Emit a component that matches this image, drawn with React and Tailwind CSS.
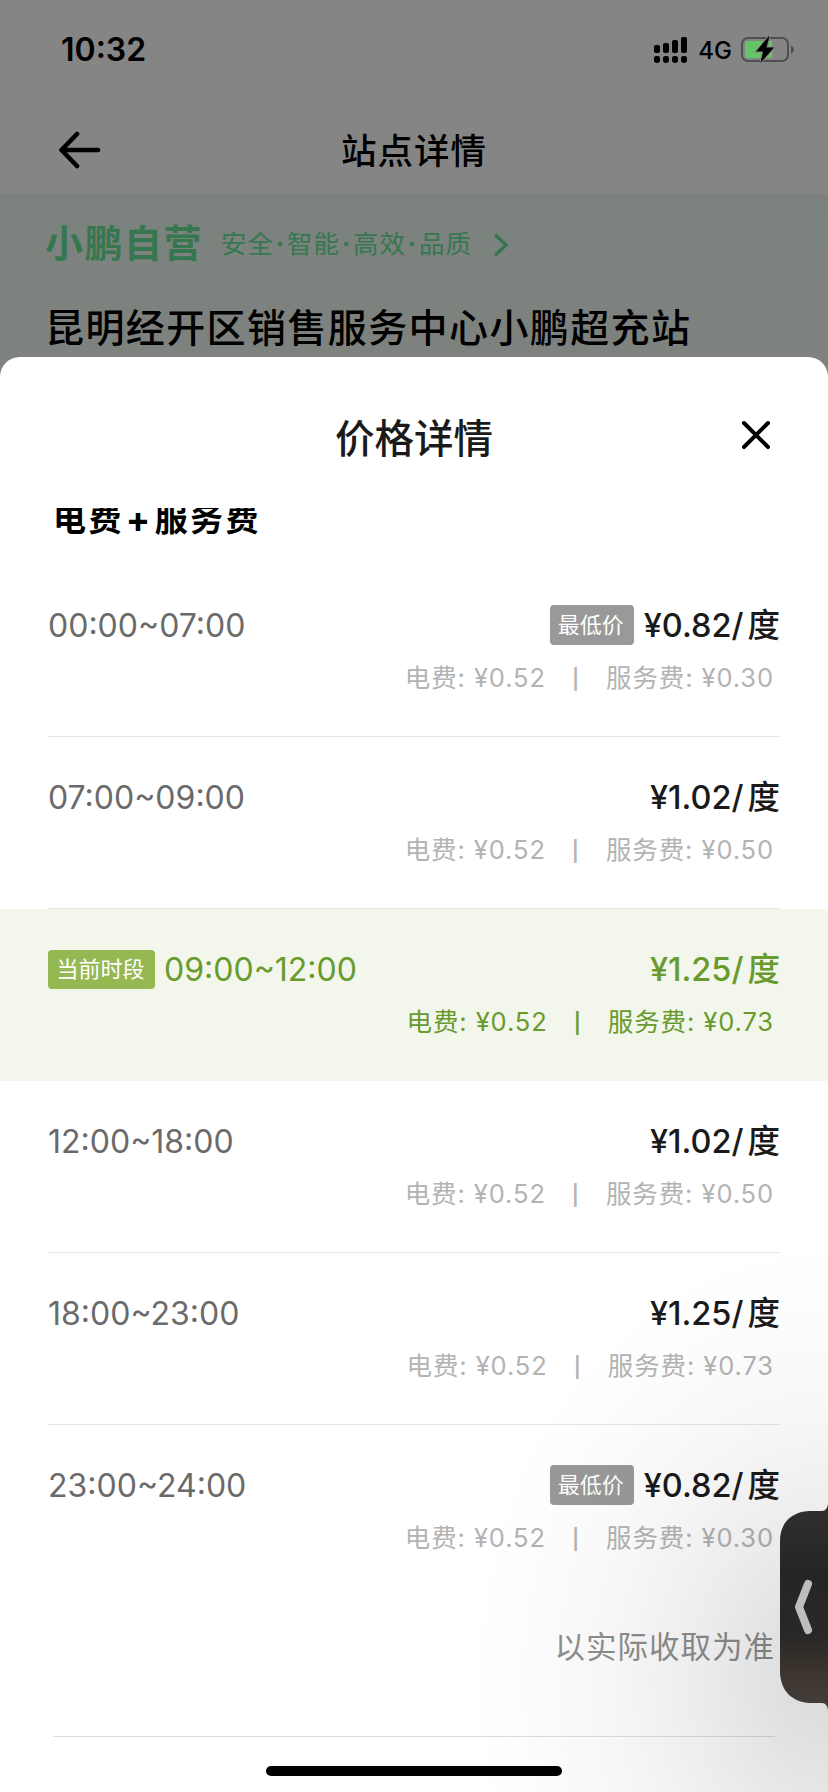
const periods = [
  { time: '00:00~07:00', price: '0.82', power: '0.52', service: '0.30', lowest: true },
  { time: '07:00~09:00', price: '1.02', power: '0.52', service: '0.50' },
  { time: '09:00~12:00', price: '1.25', power: '0.52', service: '0.73', current: true },
  { time: '12:00~18:00', price: '1.02', power: '0.52', service: '0.50' },
  { time: '18:00~23:00', price: '1.25', power: '0.52', service: '0.73' },
  { time: '23:00~24:00', price: '0.82', power: '0.52', service: '0.30', lowest: true },
];

const tags = ['安全', '智能', '高效', '品质'];

function StatusBar() {
  return (
    <div className="flex h-[100px] items-center justify-between pl-[61px] pr-[33px]">
      <span className="text-[32px] font-semibold leading-none">10:32</span>
      <div className="flex items-center">
        <svg width="34" height="28" viewBox="0 0 34 28" fill="currentColor">
          <rect x="0" y="9" width="6" height="8" rx="2" />
          <rect x="9" y="7" width="6" height="10" rx="2" />
          <rect x="18" y="4" width="6" height="13" rx="2" />
          <rect x="27" y="1" width="6" height="16" rx="2" />
          <rect x="0" y="20" width="6" height="7" rx="2.4" />
          <rect x="9" y="20" width="6" height="7" rx="2.4" />
          <rect x="18" y="20" width="6" height="7" rx="2.4" />
          <rect x="27" y="20" width="6" height="7" rx="2.4" />
        </svg>
        <span className="ml-[10px] pt-[1px] text-[24px] font-medium leading-none">4G</span>
        <svg className="ml-[9px]" width="54" height="28" viewBox="0 0 54 28">
          <rect x="1" y="2" width="46" height="23" rx="6" fill="none" stroke="#4f4f4f" strokeWidth="2" />
          <path d="M7 5H31V22H7Q4 22 4 19V8Q4 5 7 5Z" fill="#65c466" />
          <path d="M50 9.500Q53 11 53 13.500T50 18Z" fill="#4f4f4f" />
          <path d="M28 0L15 15.500H22L19.500 27L33 11.500H25.500L28.500 0Z" fill="#000" stroke="#858585" strokeWidth="2" paintOrder="stroke" />
        </svg>
      </div>
    </div>
  );
}

function NavBar() {
  return (
    <div className="grid h-[94px] grid-cols-3 items-center pl-[57px] pr-[57px] pt-[6px]">
      <svg width="44" height="38" viewBox="0 0 44 38" fill="none" stroke="currentColor" strokeWidth="4.600" strokeLinecap="round" strokeLinejoin="round">
        <path d="M20 3L4.500 19L20 35M4.500 19H41" />
      </svg>
      <h1 className="pt-[3px] text-center text-[35.500px] font-medium leading-none tracking-[1px]">站点详情</h1>
    </div>
  );
}

function StationHeader() {
  return (
    <div className="h-[183px] bg-gradient-to-b from-[#7b827e] to-[#7f827f] pl-[45px] pt-[29px]">
      <div className="flex h-[40px] items-center text-[#36774f]">
        <span className="text-[38px] font-bold leading-none tracking-[1.500px]">小鹏自营</span>
        <div className="ml-[18px] flex items-center pt-[2px] text-[25.500px] leading-none tracking-[1px]">
          {tags.map((tag, i) => (
            <span key={tag} className="flex items-center">
              {i > 0 && <span className="w-[13px] text-center font-bold">·</span>}
              {tag}
            </span>
          ))}
        </div>
        <svg className="ml-[20px] mt-[3px]" width="18" height="24" viewBox="0 0 18 24" fill="none" stroke="currentColor" strokeWidth="3.400">
          <path d="M3 1.500L14 12L3 22.500" />
        </svg>
      </div>
      <h2 className="mt-[45px] whitespace-nowrap text-[39px] font-medium leading-none tracking-[1.400px] text-black">
        昆明经开区销售服务中心小鹏超充站
      </h2>
    </div>
  );
}

function PeriodRow({ period, last }) {
  const { time, price, power, service, lowest, current } = period;
  return (
    <div className={current ? 'h-[172px] bg-[#f2f6eb] px-12 text-[#689a2e]' : 'h-[172px] px-12'}>
      <div
        className={
          current || last
            ? 'flex h-full flex-col pt-[40px]'
            : 'flex h-full flex-col border-b border-[#e5e5e5] pt-[40px]'
        }
      >
        <div className="flex h-[40px] items-center justify-between">
          <div className="flex items-center">
            {current && (
              <span className="mr-[9px] flex h-[39px] w-[107px] items-center justify-center rounded-[4px] bg-[#95b853] pr-[2px] text-[22px] text-white">
                当前时段
              </span>
            )}
            <span className={current ? 'pt-[2px] text-[32px] leading-none' : 'pt-[2px] text-[32px] leading-none text-[#6a6a6a]'}>
              {time}
            </span>
          </div>
          <div className="flex items-center">
            {lowest && (
              <span className="mr-[10px] flex h-[40px] w-[84px] items-center justify-center rounded-[4px] bg-[#999999] pr-[2px] text-[22px] text-white">
                最低价
              </span>
            )}
            <span
              className={
                current
                  ? 'flex items-center pt-[3px] text-[32.500px] font-medium leading-none'
                  : 'flex items-center pt-[3px] text-[32.500px] font-medium leading-none text-[#1a1a1a]'
              }
            >
              ¥{price}/<span className="ml-[4px]">度</span>
            </span>
          </div>
        </div>
        <div
          className={
            current
              ? 'mt-[13px] flex items-center justify-end pr-[6px] text-[25.500px] leading-[38px] tracking-[0.900px]'
              : 'mt-[13px] flex items-center justify-end pr-[6px] text-[25.500px] leading-[38px] tracking-[0.900px] text-[#b3b3b3]'
          }
        >
          <span>电费: ¥{power}</span>
          <span className="mx-[26px] pt-[2px] text-[20px] font-semibold">|</span>
          <span>服务费: ¥{service}</span>
        </div>
      </div>
    </div>
  );
}

function EdgeHandle() {
  return (
    <>
      <div className="pointer-events-none absolute bottom-0 right-0 h-[560px] w-[380px] bg-[radial-gradient(ellipse_360px_440px_at_100%_80%,rgba(0,0,0,0.150)_0%,rgba(0,0,0,0.115)_18%,rgba(0,0,0,0.070)_38%,rgba(0,0,0,0.030)_62%,rgba(0,0,0,0.010)_83%,transparent_100%)]" />
      <svg className="absolute right-0 top-[1147px]" width="48" height="208" viewBox="0 0 48 208" fill="none">
        <defs>
          <linearGradient id="handle" x1="0" y1="0" x2="0" y2="1">
            <stop offset="0" stopColor="#302f2e" />
            <stop offset="0.350" stopColor="#252525" />
            <stop offset="0.650" stopColor="#2a2826" />
            <stop offset="0.800" stopColor="#3b332d" />
            <stop offset="1" stopColor="#453f3b" />
          </linearGradient>
        </defs>
        <path
          d="M48 0Q47 7 42 7H29C11 8 0 19 0 37V169C1 187 12 198 30 199H42Q47 199 48 206Z"
          fill="url(#handle)"
        />
        <path d="M28 80L19 103L28 126" stroke="#bdbdbd" strokeWidth="8" strokeLinecap="round" strokeLinejoin="round" />
      </svg>
    </>
  );
}

function PriceSheet() {
  return (
    <section className="relative -mt-[20px] flex h-[1435px] flex-col overflow-hidden rounded-t-[20px] bg-white">
      <div className="flex h-[151px] items-center pt-[12px]">
        <h2 className="ml-[200px] flex-1 pt-[3px] text-center text-[39.500px] font-medium leading-none text-[#1a1a1a]">
          价格详情
        </h2>
        <div className="flex w-[200px] justify-end pb-[8px] pr-[57px]">
          <svg width="30" height="30" viewBox="0 0 30 30" stroke="#000" strokeWidth="4" strokeLinecap="round">
            <path d="M3 3L27 27M27 3L3 27" />
          </svg>
        </div>
      </div>

      {/* Scrolled list, its heading is cut by the sheet title */}
      <div className="flex h-[57px] items-start overflow-hidden pl-[53px]">
        <h3 className="-mt-[5px] flex items-center text-[33px] font-bold leading-none tracking-[2.400px] text-black">
          电费<span className="mx-[2px] text-[36px] leading-[33px]">+</span>服务费
        </h3>
      </div>
      <div>
        {periods.map((period, i) => (
          <PeriodRow key={period.time} period={period} last={i === periods.length - 1} />
        ))}
      </div>
      <div className="mx-[53px] h-[140px] border-b border-[#dedede] pt-[28px] text-right text-[30.500px] leading-[44px] tracking-[1px] text-[#8f8f8f]">
        以实际收取为准
      </div>

      <EdgeHandle />
      <div className="absolute bottom-[16px] left-[266px] h-[10px] w-[296px] rounded-full bg-black" />
    </section>
  );
}

export default function App() {
  return (
    <div className="h-[1792px] w-[828px] overflow-hidden bg-[#858585] font-['Inter','Noto_Sans_CJK_SC',sans-serif] text-black">
      <StatusBar />
      <NavBar />
      <StationHeader />
      <PriceSheet />
    </div>
  );
}
